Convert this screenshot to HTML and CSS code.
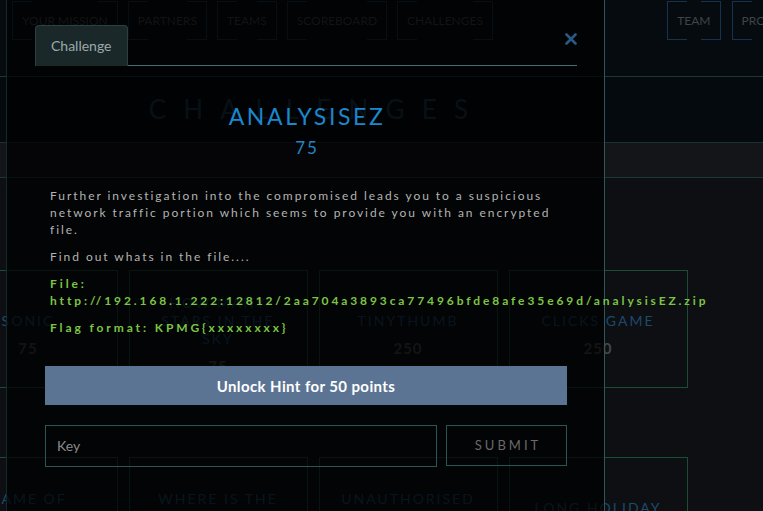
FILE: index.html
```html
<!DOCTYPE html>
<html lang="en">
<head>
<meta charset="utf-8">
<title>Challenges</title>
<link rel="stylesheet" href="styles.css">
</head>
<body>
<div class="page">
  <header class="topbar">
    <nav class="nav nav-left">
      <a class="nav-item">Your Mission</a>
      <a class="nav-item">Partners</a>
      <a class="nav-item">Teams</a>
      <a class="nav-item">Scoreboard</a>
      <a class="nav-item">Challenges</a>
    </nav>
    <nav class="nav nav-right">
      <a class="nav-item">Team</a>
      <a class="nav-item">Profile</a>
    </nav>
  </header>
  <section class="hero"><h1 class="hero-title">Challenges</h1></section>
  <div class="band"></div>
  <main class="content">
    <div class="grid">
      <div class="card"><div class="card-title">Sonic</div><div class="card-points">75</div></div>
      <div class="card"><div class="card-title">How many<br>stars in the<br>sky</div><div class="card-points">75</div></div>
      <div class="card"><div class="card-title">Tinythumb</div><div class="card-points">250</div></div>
      <div class="card"><div class="card-title">Clicks game</div><div class="card-points">250</div></div>
      <div class="card"><div class="card-title">Game of<br>thrones</div><div class="card-points">100</div></div>
      <div class="card"><div class="card-title">Where is the<br>flag</div><div class="card-points">100</div></div>
      <div class="card"><div class="card-title">Unauthorised<br>access</div><div class="card-points">150</div></div>
      <div class="card"><div class="card-title">Long holiday</div><div class="card-points">150</div></div>
    </div>
  </main>
</div>

<div class="modal">
  <div class="modal-head">
    <div class="tab">Challenge</div>
    <div class="tab-rest">
      <span class="close" aria-label="close">
        <svg width="12" height="12" viewBox="0 0 12 12"><path d="M1.5 1.5 L10.5 10.5 M10.5 1.5 L1.5 10.5" stroke="#2b5884" stroke-width="2.6" stroke-linecap="round" fill="none"/></svg>
      </span>
    </div>
  </div>
  <div class="modal-body">
    <h2 class="ch-name">ANALYSISEZ</h2>
    <div class="ch-value">75</div>
    <div class="desc">
      <p>Further investigation into the compromised leads you to a suspicious network traffic portion which seems to provide you with an encrypted file.</p>
      <p>Find out whats in the file....</p>
      <p class="green">File: http://192.168.1.222:12812/2aa704a3893ca77496bfde8afe35e69d/analysisEZ.zip</p>
      <p class="green">Flag format: KPMG{xxxxxxxx}</p>
    </div>
    <button class="hint-btn">Unlock Hint for 50 points</button>
    <form class="key-row">
      <div class="key-input">Key</div>
      <div class="submit-btn">SUBMIT</div>
    </form>
  </div>
</div>
</body>
</html>
```

FILE: styles.css
```css
html, body {
  margin: 0;
  padding: 0;
}
body {
  width: 763px;
  height: 511px;
  overflow: hidden;
  background: #0d0f12;
  font-family: Lato, "Open Sans", sans-serif;
  position: relative;
}

/* ---------- page behind ---------- */
.topbar {
  height: 76px;
  background: #050b0f;
  border-bottom: 1px solid #1d3739;
  display: flex;
  align-items: flex-start;
}
.nav {
  display: flex;
  gap: 10px;
  padding-top: 1px;
}
.nav-left { margin-left: 12px; }
.nav-right { margin-left: auto; margin-right: -36px; gap: 11px; }
.nav-item {
  position: relative;
  height: 39px;
  line-height: 39px;
  padding: 0 10px;
  font-size: 12px;
  text-transform: uppercase;
  color: #3f454a;
  white-space: nowrap;
}
.nav-item::before,
.nav-item::after {
  content: "";
  position: absolute;
  top: 0;
  bottom: 0;
  width: 19px;
  border: 1px solid #163250;
}
.nav-item::before { left: 0; border-right: none; }
.nav-item::after { right: 0; border-left: none; }

.hero {
  height: 65px;
  background: #040a0e;
  border-bottom: 1px solid #1b3133;
}
.hero-title {
  margin: 0;
  width: 626px;
  padding-left: 8px;
  box-sizing: border-box;
  text-align: center;
  line-height: 65px;
  font-size: 26px;
  font-weight: 400;
  letter-spacing: 17.2px;
  text-transform: uppercase;
  color: #1c3c50;
}
.band {
  height: 34px;
  background: #131519;
  border-bottom: 1px solid #1d3739;
}
.content {
  width: 626px;
  padding-top: 92px;
}
.grid {
  display: grid;
  grid-template-columns: repeat(4, 179px);
  grid-auto-rows: 118px;
  column-gap: 11px;
  row-gap: 69px;
  justify-content: center;
}
.card {
  border: 1px solid #1b4d34;
  display: flex;
  flex-direction: column;
  justify-content: center;
  align-items: center;
  padding-top: 11px;
  text-align: center;
}
.card-title {
  font-size: 14px;
  line-height: 18px;
  letter-spacing: 2px;
  text-transform: uppercase;
  color: #1c4a6c;
}
.card-points {
  margin-top: 9px;
  font-size: 15px;
  line-height: 18px;
  font-weight: 700;
  letter-spacing: 1px;
  color: #474747;
}

/* ---------- modal ---------- */
.modal {
  position: absolute;
  left: 6px;
  top: 0;
  bottom: 0;
  width: 599px;
  box-sizing: border-box;
  background: rgba(0, 0, 0, 0.72);
  border-left: 1px solid #142a2a;
  border-right: 1px solid #2e5858;
}
.modal-head {
  display: flex;
  padding: 25px 27px 0 28px;
}
.tab {
  height: 41px;
  box-sizing: border-box;
  padding: 0 15px;
  line-height: 40px;
  font-size: 14px;
  color: #9aa9aa;
  background: #1a2829;
  border: 1px solid #2a4143;
  border-bottom: none;
  border-radius: 4px 4px 0 0;
}
.tab-rest {
  flex: 1;
  border-bottom: 1px solid #466f75;
  display: flex;
  justify-content: flex-end;
  align-items: flex-start;
}
.close {
  display: block;
  margin-top: 8px;
  margin-right: 0;
  width: 12px;
  height: 12px;
}
.close svg { display: block; }

.modal-body {
  padding: 0 37px 0 38px;
  text-align: center;
}
.ch-name {
  margin: 36px 0 0;
  font-size: 23px;
  line-height: 28px;
  font-weight: 400;
  letter-spacing: 2.6px;
  padding-left: 2px;
  color: #1b87cd;
}
.ch-value {
  margin-top: 7px;
  font-size: 17px;
  line-height: 22px;
  letter-spacing: 2px;
  padding-left: 2px;
  color: #2784c0;
}
.desc {
  margin-top: 28px;
  padding: 0 7px 0 5px;
  text-align: left;
}
.desc p {
  margin: 0 0 10px;
  font-size: 12px;
  line-height: 17px;
  letter-spacing: 1.95px;
  color: #b3b3b3;
}
.desc p.green {
  color: #7cc443;
  font-weight: 700;
  letter-spacing: 2.9px;
}
.desc p:last-child { margin-bottom: 0; }

.hint-btn {
  display: block;
  width: 100%;
  height: 39px;
  margin-top: 30px;
  border: none;
  background: #5b7493;
  color: #ffffff;
  font-family: Lato, sans-serif;
  font-size: 15px;
  letter-spacing: 0.4px;
  font-weight: 700;
}
.key-row {
  display: flex;
  gap: 9px;
  margin: 20px 0 0;
}
.key-input {
  flex: 1;
  height: 42px;
  box-sizing: border-box;
  border: 1px solid #2a5555;
  padding-left: 11px;
  line-height: 40px;
  font-size: 14px;
  color: #8a8a8a;
  text-align: left;
}
.submit-btn {
  width: 121px;
  height: 41px;
  box-sizing: border-box;
  border: 1px solid #2a5555;
  line-height: 39px;
  font-size: 13px;
  letter-spacing: 3px;
  padding-left: 3px;
  color: #6a6a6a;
}
```
